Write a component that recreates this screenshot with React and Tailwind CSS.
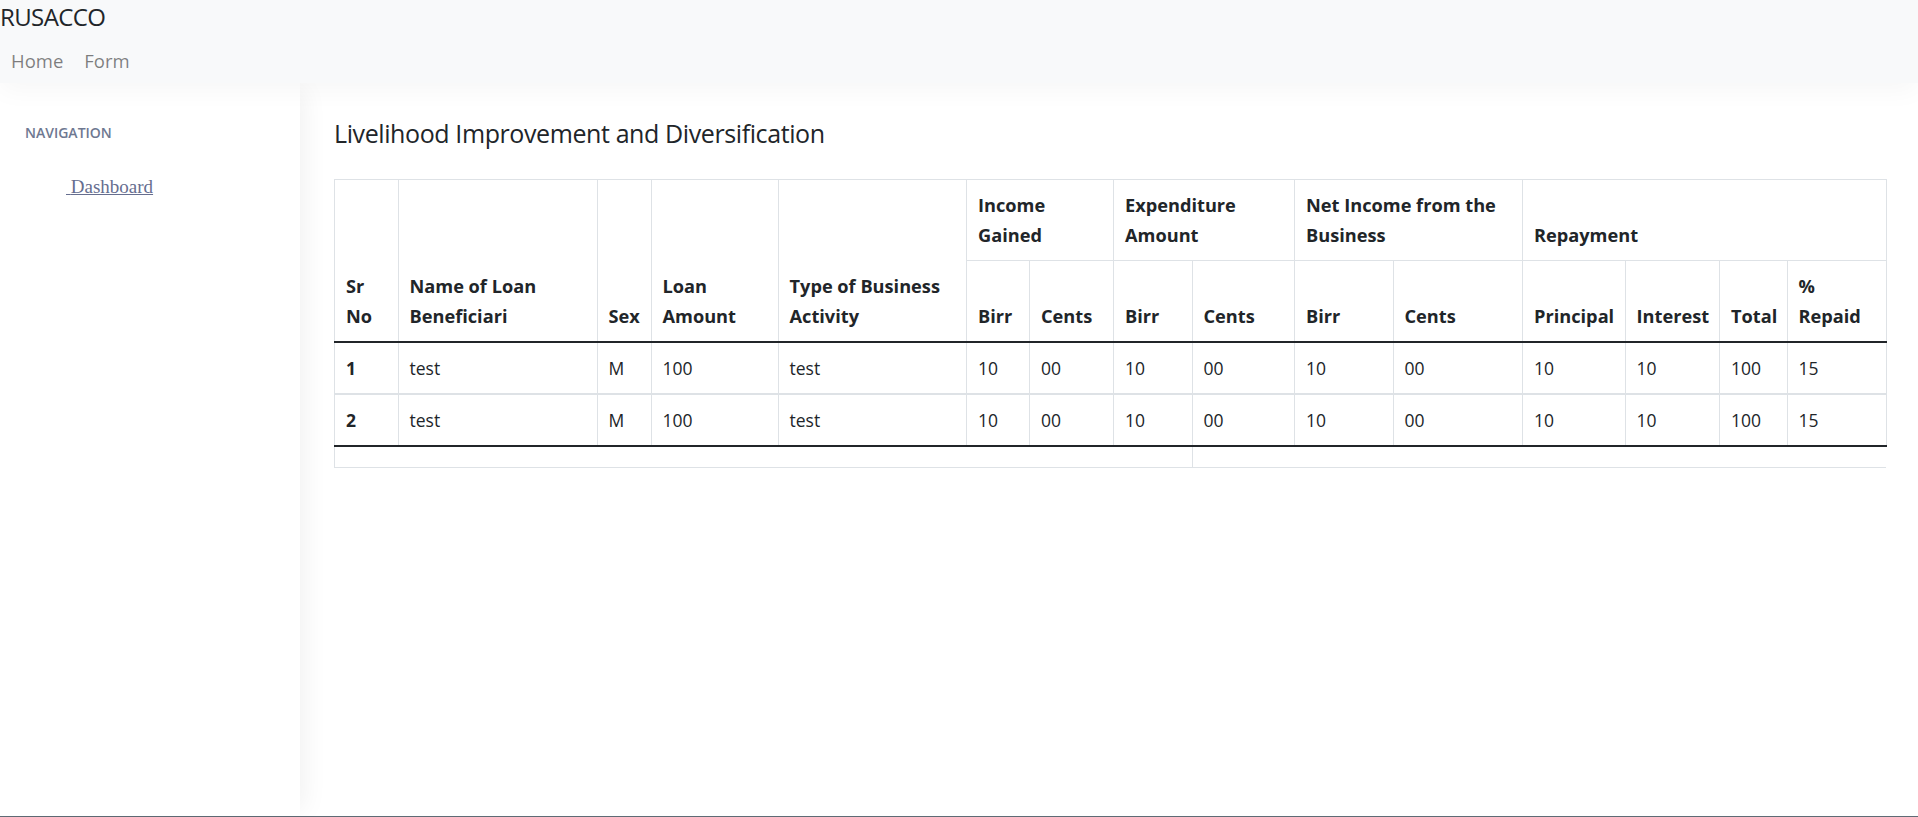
import React from 'react';

const SANS = { fontFamily: '"Open Sans", "Noto Sans", Arial, sans-serif' };

const COLS = [63.5, 199, 54, 127, 188.5, 63, 84, 78.5, 102.5, 98.5, 129.5, 102.5, 94.5, 67.5, 99];

const ROWS = [
  ['1', 'test', 'M', '100', 'test', '10', '00', '10', '00', '10', '00', '10', '10', '100', '15'],
  ['2', 'test', 'M', '100', 'test', '10', '00', '10', '00', '10', '00', '10', '10', '100', '15'],
];

// th/td share the same box; only weight and the dark rule differ
const cell = 'border border-[#dee2e6] px-[11px] py-[10px] leading-[30px] text-left align-bottom whitespace-nowrap';
const head = `${cell} text-[18.2px]`;
const headBottom = 'border-b-2 border-b-[#212529]';

export default function App() {
  return (
    <div className="h-screen flex flex-col bg-white text-[#212529]" style={SANS}>
      {/* ---- TOP NAVBAR ---- */}
      <nav className="h-[83px] shrink-0 bg-[#f8f9fa] relative z-20 shadow-[0_8px_24px_rgba(0,0,0,0.035)]">
        <div className="text-[24px] leading-[34px] tracking-[-0.6px] text-[#212529]">RUSACCO</div>
        <div className="mt-[13px] flex gap-[21px] pl-[11px] text-[18.5px] leading-[28px] text-black/50">
          <a>Home</a>
          <a>Form</a>
        </div>
      </nav>

      <div className="flex-1 flex min-h-0">
        {/* ---- SIDEBAR ---- */}
        <aside className="w-[300px] shrink-0 bg-white relative z-10 shadow-[10px_0_24px_-6px_rgba(0,0,0,0.06)]">
          <div className="pt-[40px] pl-[25px] text-[14px] leading-[20px] font-semibold uppercase text-[#6e7891]">Navigation</div>
          <ul className="mt-[32px] pl-[66px]">
            <li>
              <a
                href="#"
                className="text-[19px] leading-[24px] text-[#666e8f] underline"
                style={{ fontFamily: '"Liberation Serif", "Times New Roman", serif' }}
              >
                {'\u00a0'}Dashboard
              </a>
            </li>
          </ul>
        </aside>

        {/* ---- MAIN ---- */}
        <main className="flex-1 min-w-0 pl-[34px] pr-[32px] pt-[35px]">
          <h4 className="text-[25px] leading-[30px] font-medium tracking-[-0.4px] mb-[31px]">
            Livelihood Improvement and Diversification
          </h4>

          <table className="table-fixed border-collapse w-[1551.5px] text-[17.5px]">
            <colgroup>
              {COLS.map((w, i) => (
                <col key={i} style={{ width: w }} />
              ))}
            </colgroup>
            <thead>
              <tr>
                <th rowSpan={2} className={`${head} ${headBottom}`}>Sr<br />No</th>
                <th rowSpan={2} className={`${head} ${headBottom}`}>Name of Loan<br />Beneficiari</th>
                <th rowSpan={2} className={`${head} ${headBottom}`}>Sex</th>
                <th rowSpan={2} className={`${head} ${headBottom}`}>Loan<br />Amount</th>
                <th rowSpan={2} className={`${head} ${headBottom}`}>Type of Business<br />Activity</th>
                <th colSpan={2} className={head}>Income<br />Gained</th>
                <th colSpan={2} className={head}>Expenditure<br />Amount</th>
                <th colSpan={2} className={head}>Net Income from the<br />Business</th>
                <th colSpan={4} className={head}>Repayment</th>
              </tr>
              <tr>
                {['Birr', 'Cents', 'Birr', 'Cents', 'Birr', 'Cents', 'Principal', 'Interest', 'Total'].map((h, i) => (
                  <th key={i} className={`${head} ${headBottom}`}>{h}</th>
                ))}
                <th className={`${head} ${headBottom}`}>%<br />Repaid</th>
              </tr>
            </thead>
            <tbody>
              {ROWS.map((r, ri) => (
                <tr key={ri}>
                  {r.map((v, i) =>
                    i === 0 ? (
                      <th key={i} className={`${cell} align-middle ${ri === ROWS.length - 1 ? headBottom : 'border-b-2'}`}>{v}</th>
                    ) : (
                      <td key={i} className={`${cell} align-middle font-normal ${ri === ROWS.length - 1 ? headBottom : 'border-b-2'}`}>{v}</td>
                    )
                  )}
                </tr>
              ))}
            </tbody>
            <tfoot>
              <tr>
                <td colSpan={8} className="border border-[#dee2e6] border-t-0 h-[21px] p-0"></td>
                <td colSpan={7} className="border border-[#dee2e6] border-t-0 border-r-0 h-[21px] p-0"></td>
              </tr>
            </tfoot>
          </table>
        </main>
      </div>

      <div className="h-px shrink-0 bg-[#5f6b75]" />
    </div>
  );
}
